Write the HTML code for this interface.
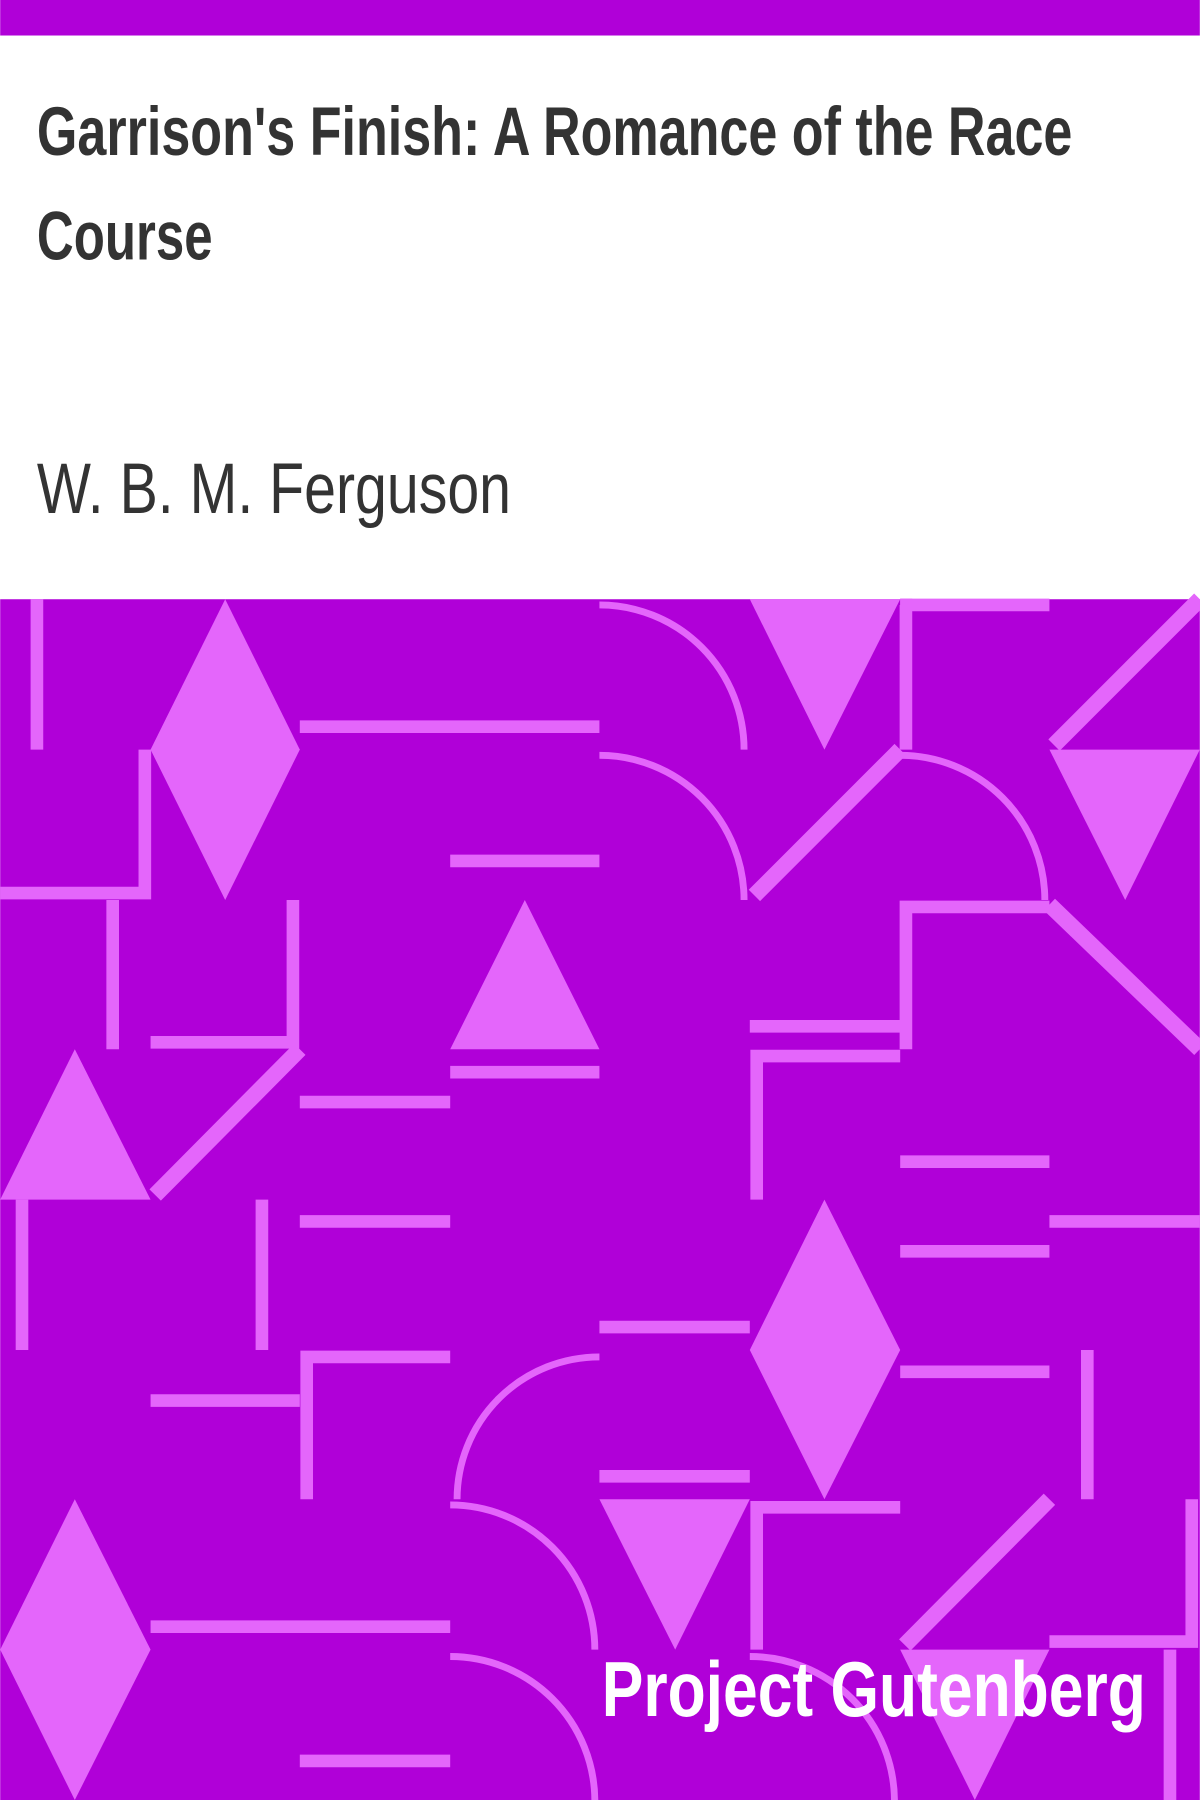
<!DOCTYPE html>
<html><head><meta charset="utf-8"><style>
html,body{margin:0;padding:0;background:#fff;}
svg{display:block;}
</style></head><body>
<svg width="1200" height="1800" viewBox="0 0 1045 1568" xmlns="http://www.w3.org/2000/svg">
<rect x="0" y="0" width="1045" height="31" fill="#b000d8"/>
<rect x="0" y="31" width="1045" height="491" fill="#fff"/>
<text x="32" y="135" textLength="902" lengthAdjust="spacingAndGlyphs" font-family="'Liberation Sans',sans-serif" font-weight="bold" font-size="60" fill="#333">Garrison's Finish: A Romance of the Race</text>
<text x="32" y="226" textLength="153" lengthAdjust="spacingAndGlyphs" font-family="'Liberation Sans',sans-serif" font-weight="bold" font-size="60" fill="#333">Course</text>
<text x="32" y="447" textLength="413" lengthAdjust="spacingAndGlyphs" font-family="'Liberation Sans',sans-serif" font-size="62" fill="#333">W. B. M. Ferguson</text>
<rect x="0" y="522" width="1045" height="1046" fill="#b000d8"/>
<g fill="#e466fb">
<polygon points="196,522 261,653 196,784 131,653"/>
<polygon points="653,522 784,522 718,653"/>
<polygon points="914,653 1045,653 980,784"/>
<polygon points="392,914 522,914 457,784"/>
<polygon points="0,1045 131,1045 65,914"/>
<polygon points="718,1045 784,1176 718,1306 653,1176"/>
<polygon points="65,1306 131,1437 65,1568 0,1437"/>
<polygon points="522,1306 653,1306 588,1437"/>
<polygon points="784,1437 914,1437 849,1568"/>
</g>
<g stroke="#e466fb" stroke-width="11" fill="none">
<line x1="32" y1="522" x2="32" y2="653"/>
<line x1="261" y1="633" x2="522" y2="633"/>
<polyline points="784,527 789,527 789,653"/>
<line x1="784" y1="527" x2="914" y2="527"/>
<line x1="918" y1="649" x2="1045" y2="522" stroke-width="14"/>
<polyline points="0,778 126,778 126,653"/>
<line x1="657" y1="780" x2="784" y2="653" stroke-width="14"/>
<line x1="392" y1="750" x2="522" y2="750"/>
<line x1="98" y1="784" x2="98" y2="914"/>
<polyline points="131,908 255,908 255,784"/>
<line x1="135" y1="1041" x2="261" y2="914" stroke-width="14"/>
<line x1="392" y1="934" x2="522" y2="934"/>
<line x1="261" y1="960" x2="392" y2="960"/>
<polyline points="789,914 789,790 914,790"/>
<line x1="914" y1="788" x2="1045" y2="914" stroke-width="14"/>
<line x1="653" y1="894" x2="784" y2="894"/>
<polyline points="784,920 659,920 659,1045"/>
<line x1="19" y1="1045" x2="19" y2="1176"/>
<line x1="228" y1="1045" x2="228" y2="1176"/>
<line x1="261" y1="1064" x2="392" y2="1064"/>
<line x1="784" y1="1012" x2="914" y2="1012"/>
<line x1="914" y1="1064" x2="1045" y2="1064"/>
<line x1="784" y1="1090" x2="914" y2="1090"/>
<line x1="522" y1="1156" x2="653" y2="1156"/>
<polyline points="392,1182 267,1182 267,1306"/>
<line x1="131" y1="1220" x2="261" y2="1220"/>
<line x1="784" y1="1195" x2="914" y2="1195"/>
<line x1="947" y1="1176" x2="947" y2="1306"/>
<line x1="522" y1="1286" x2="653" y2="1286"/>
<polyline points="784,1313 659,1313 659,1437"/>
<line x1="788" y1="1433" x2="914" y2="1306" stroke-width="14"/>
<polyline points="1038,1306 1038,1430 914,1430"/>
<line x1="1019" y1="1437" x2="1019" y2="1568"/>
<line x1="131" y1="1417" x2="392" y2="1417"/>
<line x1="261" y1="1534" x2="392" y2="1534"/>
</g>
<g stroke="#e466fb" stroke-width="6" fill="none">
<path d="M522,527 A126,126 0 0 1 648,653"/>
<path d="M522,658 A126,126 0 0 1 648,784"/>
<path d="M784,658 A126,126 0 0 1 910,784"/>
<path d="M398,1306 A124,124 0 0 1 522,1182"/>
<path d="M392,1311 A126,126 0 0 1 518,1437"/>
<path d="M392,1443 A126,126 0 0 1 518,1568"/>
<path d="M653,1443 A126,126 0 0 1 779,1568"/>
</g>
<text x="524" y="1495" textLength="474" lengthAdjust="spacingAndGlyphs" font-family="'Liberation Sans',sans-serif" font-weight="bold" font-size="68" fill="#fff">Project Gutenberg</text>
</svg>
</body></html>
